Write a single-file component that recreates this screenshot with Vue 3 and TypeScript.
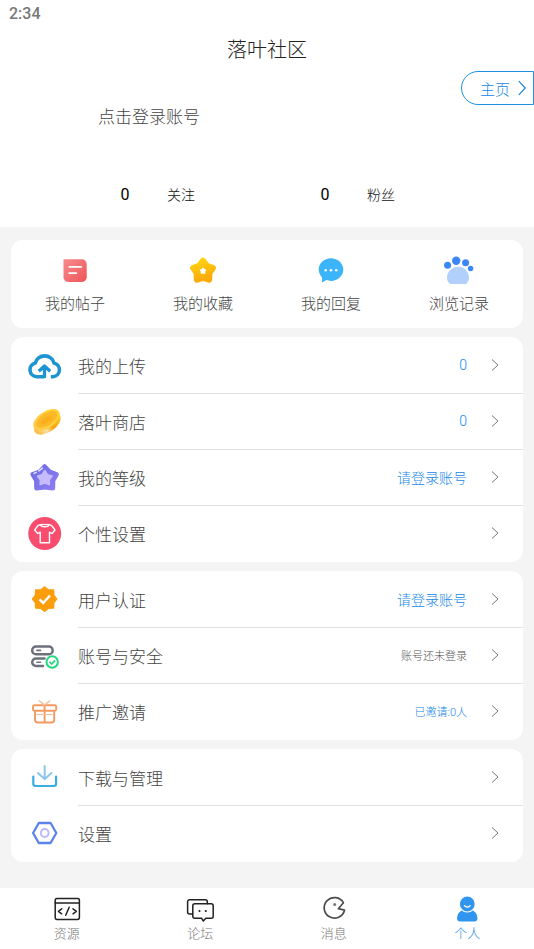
<script setup lang="ts">
interface Row {
  icon: string
  label: string
  value?: string
  tone?: 'small' | 'muted'
}

const stats = [
  { count: 0, label: '关注' },
  { count: 0, label: '粉丝' },
]

const shortcuts = [
  { icon: 'post', label: '我的帖子' },
  { icon: 'star', label: '我的收藏' },
  { icon: 'reply', label: '我的回复' },
  { icon: 'paw', label: '浏览记录' },
]

const groups: Row[][] = [
  [
    { icon: 'upload', label: '我的上传', value: '0' },
    { icon: 'coin', label: '落叶商店', value: '0' },
    { icon: 'level', label: '我的等级', value: '请登录账号' },
    { icon: 'shirt', label: '个性设置' },
  ],
  [
    { icon: 'verify', label: '用户认证', value: '请登录账号' },
    { icon: 'security', label: '账号与安全', value: '账号还未登录', tone: 'muted' },
    { icon: 'gift', label: '推广邀请', value: '已邀请:0人', tone: 'small' },
  ],
  [
    { icon: 'download', label: '下载与管理' },
    { icon: 'settings', label: '设置' },
  ],
]

const tabs = [
  { icon: 'code', label: '资源' },
  { icon: 'forum', label: '论坛' },
  { icon: 'message', label: '消息' },
  { icon: 'person', label: '个人', active: true },
]
</script>

<template>
  <div class="page">
    <header class="header">
      <div class="status">2:34</div>
      <h1 class="title">落叶社区</h1>
      <div class="profile">
        <a class="login" href="#login">点击登录账号</a>
        <button class="home" type="button">
          主页
          <svg class="home-arrow" viewBox="0 0 8 16" fill="none" stroke="currentColor" stroke-width="1.2" aria-hidden="true">
            <path d="M.8 1.2 7.2 8 .8 14.8" />
          </svg>
        </button>
      </div>
      <div class="stats">
        <a v-for="s in stats" :key="s.label" class="stat" href="#stats">
          <span class="stat-count">{{ s.count }}</span>
          <span class="stat-label">{{ s.label }}</span>
        </a>
      </div>
    </header>

    <main class="content">
      <nav class="card shortcuts">
        <a v-for="s in shortcuts" :key="s.label" class="shortcut" href="#shortcut">
          <svg class="icon-md" viewBox="0 0 30 30" fill="none" aria-hidden="true">
            <template v-if="s.icon === 'post'">
              <defs>
                <linearGradient id="postFill" x1="0" y1="0" x2="1" y2="1">
                  <stop offset="0" stop-color="#f78c8e" />
                  <stop offset="1" stop-color="#ee5458" />
                </linearGradient>
              </defs>
              <path d="M3.5 3.3H22a4.7 4.7 0 0 1 4.7 4.7v13.3A4.7 4.7 0 0 1 22 26H8.2a4.700 4.700 0 0 1-4.700-4.700z" fill="url(#postFill)" />
              <path d="M9.300 10.900h12M9.300 17.200h7" stroke="#fff" stroke-width="1.800" stroke-linecap="round" />
            </template>
            <template v-else-if="s.icon === 'star'">
              <defs>
                <linearGradient id="starFill" x1="0" y1="0" x2="0.300" y2="1">
                  <stop offset="0" stop-color="#ffd313" />
                  <stop offset="1" stop-color="#fbac0b" />
                </linearGradient>
              </defs>
              <path
                d="M15 5 18.800 9.900 24.700 12 21.200 17 21 23.500 15 21.700 9 23.500 8.800 17 5.300 12 11.200 9.900Z"
                fill="url(#starFill)" stroke="url(#starFill)" stroke-width="6.400" stroke-linejoin="round"
              />
              <path
                d="M15 11.800 16.100 13.500 18 14 16.800 15.600 16.900 17.500 15 16.900 13.100 17.500 13.200 15.600 12 14 13.900 13.500Z"
                fill="#fff" stroke="#fff" stroke-width="1" stroke-linejoin="round"
              />
            </template>
            <template v-else-if="s.icon === 'reply'">
              <path d="M15 2.200c6.900 0 12.300 5 12.300 11.300S21.900 24.900 15 24.900c-1.800 0-3.200-.3-4.600-.8L6 26.500l.1-5.100C4 19.300 2.700 16.600 2.700 13.500 2.700 7.200 8.100 2.200 15 2.200z" fill="#3cb4fa" />
              <g fill="#fff">
                <circle cx="9.700" cy="14.300" r="1.300" />
                <circle cx="15" cy="14.300" r="1.300" />
                <circle cx="20.300" cy="14.300" r="1.300" />
              </g>
            </template>
            <template v-else>
              <g fill="#3d87f5">
                <circle cx="3.600" cy="9.200" r="3.500" />
                <circle cx="12.200" cy="4.800" r="4.200" />
                <circle cx="21.600" cy="6.700" r="3.500" />
                <circle cx="26.600" cy="12.500" r="2.700" />
              </g>
              <path d="M14.200 10.800c6.200 0 10.800 4.800 10.800 11 0 2.800-1.200 5-3 6.200H6.200C4.300 26.800 3 24.600 3 21.800c0-6.200 5-11 11.200-11z" fill="#b1d0fb" />
            </template>
          </svg>
          <span class="shortcut-label">{{ s.label }}</span>
        </a>
      </nav>

      <section v-for="(group, gi) in groups" :key="gi" class="card list">
        <a v-for="row in group" :key="row.label" class="row" href="#row">
          <svg class="icon-lg" viewBox="0 0 34 34" fill="none" aria-hidden="true">
            <template v-if="row.icon === 'upload'">
              <g stroke="#1d95d3" stroke-width="3.600" stroke-linejoin="round">
                <path d="M16.500 28.700H8.600A7 7 0 0 1 7.400 14.900 9.400 8.600 0 0 1 25.900 14.900 7 7 0 0 1 25.200 28.700h-2.400" />
                <path d="M16.500 30V18.500M10.800 23.200l5.700-5.200 5.700 5.200" stroke-width="3.300" />
              </g>
            </template>
            <template v-else-if="row.icon === 'coin'">
              <defs>
                <linearGradient id="coinEdge" x1="0" y1="0" x2="1" y2="0">
                  <stop offset="0" stop-color="#ffb52e" />
                  <stop offset="0.350" stop-color="#fbe0a0" />
                  <stop offset="0.600" stop-color="#f6a50e" />
                  <stop offset="1" stop-color="#ffc62d" />
                </linearGradient>
                <linearGradient id="coinFace" x1="0" y1="0" x2="1" y2="0">
                  <stop offset="0" stop-color="#ffcb4d" />
                  <stop offset="1" stop-color="#ffd22c" />
                </linearGradient>
              </defs>
              <ellipse cx="19.400" cy="19.900" rx="15" ry="8.200" transform="rotate(-34 19.400 19.900)" fill="url(#coinEdge)" />
              <ellipse cx="18.500" cy="15.800" rx="15" ry="8.300" transform="rotate(-34 18.500 15.800)" fill="url(#coinFace)" />
              <ellipse cx="18.800" cy="15.400" rx="12" ry="5.900" transform="rotate(-34 18.800 15.400)" fill="#fbb929" />
              <ellipse cx="18.200" cy="16.200" rx="7" ry="2.600" transform="rotate(-34 18.200 16.200)" fill="#fdae1d" />
            </template>
            <template v-else-if="row.icon === 'level'">
              <defs>
                <linearGradient id="levelFill" x1="0" y1="0" x2="1" y2="1">
                  <stop offset="0" stop-color="#6c6de3" />
                  <stop offset="1" stop-color="#8f7cf1" />
                </linearGradient>
              </defs>
              <path
                d="M16.600 6.500 21.400 11.600 28.600 14.300 25 20.600 24.900 28.300 16.600 27.300 8.500 28.300 8.400 20.600 4.700 14.300 11.900 11.600Z"
                fill="url(#levelFill)" stroke="url(#levelFill)" stroke-width="4.600" stroke-linejoin="round"
              />
              <path
                d="M16.800 10.900 19.500 15 23.900 16.200 21 19.900 21.200 24.400 16.800 22.900 12.400 24.400 12.600 19.900 9.700 16.200 14.100 15Z"
                fill="#c5bbfd" stroke="#c5bbfd" stroke-width="2" stroke-linejoin="round"
              />
              <path d="M6 13.400 8.300 12.300M10.800 11l3.600-2.900" stroke="#e9e7ff" stroke-width="1.400" stroke-linecap="round" />
            </template>
            <template v-else-if="row.icon === 'shirt'">
              <circle cx="16.700" cy="17.500" r="16.500" fill="#f94d70" />
              <path
                d="M12.300 8.700c1.300 2.800 7.700 2.800 9 0l2.400.9L27 14l-3 3.500-2.500-1.300v10.600H12.200V16.200l-2.500 1.300-3-3.500 3.200-4.400z"
                stroke="#fff" stroke-width="1.400" stroke-linejoin="round"
              />
              <path d="M12.500 8.500h8.600" stroke="#fff" stroke-width="1.200" />
            </template>
            <template v-else-if="row.icon === 'verify'">
              <path
                d="M16.600 5.200 20.300 8.200 25.300 8.300 25.500 13.300 28.400 17 25.500 20.700 25.300 25.700 20.300 25.900 16.600 28.900 12.900 25.900 7.900 25.700 7.700 20.700 4.800 17 7.700 13.300 7.900 8.300 12.900 8.200Z"
                fill="#fc9d0e" stroke="#fc9d0e" stroke-width="2" stroke-linejoin="round"
              />
              <path d="m11.500 17.300 3.700 3.700 6.800-7.500" stroke="#fff" stroke-width="2.500" />
            </template>
            <template v-else-if="row.icon === 'security'">
              <g stroke="#6d717c" stroke-width="2.500" stroke-linecap="round">
                <rect x="4.200" y="8.600" width="20.500" height="7.600" rx="3.800" />
                <path d="M15 28H8a3.800 3.800 0 0 1 0-7.600h8.500" />
                <path d="M9 12.400h3.500M9 24.200h3.500" stroke-width="1.600" />
              </g>
              <circle cx="24.200" cy="24" r="5.700" fill="#fff" stroke="#25d782" stroke-width="2" />
              <path d="m21.500 23.900 2.200 2.100 3.500-3.700" stroke="#25d782" stroke-width="1.800" />
            </template>
            <template v-else-if="row.icon === 'gift'">
              <g stroke="#f29a62" stroke-width="1.900" stroke-linejoin="round">
                <rect x="5" y="11.300" width="23.200" height="5.500" rx="1.500" />
                <path d="M7 17v9a2.500 2.500 0 0 0 2.500 2.500h14.200a2.500 2.500 0 0 0 2.500-2.500v-9M16.600 11.300v17.200" />
                <path d="M8.500 20.500h16" stroke-width="1.200" stroke="#f7c09b" />
              </g>
              <path d="m11 6.500 5.600 4.600 5.600-4.600" stroke="#f5bd9a" stroke-width="1.500" />
            </template>
            <template v-else-if="row.icon === 'download'">
              <path d="M5.300 16.500v7.300a2.200 2.200 0 0 0 2.200 2.200h18.400a2.200 2.200 0 0 0 2.200-2.200v-7.300" stroke="#3aaee3" stroke-width="2.200" stroke-linecap="round" />
              <path d="M16.700 6v13M10 13l6.700 6.200L23.400 13" stroke="#8ac6ee" stroke-width="2" stroke-linecap="round" />
            </template>
            <template v-else>
              <path d="M10.800 7h11.800l5.700 10-5.700 10H10.800L5.100 17z" stroke="#5b83ea" stroke-width="2.300" stroke-linejoin="round" />
              <circle cx="16.700" cy="17" r="3.900" stroke="#bdb9fa" stroke-width="2" />
            </template>
          </svg>
          <span class="row-body">
            <span class="row-label">{{ row.label }}</span>
            <span v-if="row.value" class="row-value" :class="row.tone">{{ row.value }}</span>
            <svg class="chevron" viewBox="0 0 8 14" fill="none" stroke="#777" stroke-width="1" aria-hidden="true">
              <path d="M1 1.500 7 7 1 12.500" />
            </svg>
          </span>
        </a>
      </section>
    </main>

    <nav class="tabbar">
      <a v-for="t in tabs" :key="t.label" class="tab" :class="{ active: t.active }" href="#tab">
        <svg class="icon-md" viewBox="0 0 30 30" fill="none" stroke-linecap="round" stroke-linejoin="round" aria-hidden="true">
          <template v-if="t.icon === 'code'">
            <g stroke="#222" stroke-width="1.500">
              <rect x="3.200" y="4.600" width="24.200" height="20.800" rx="1.800" />
              <path d="M3.200 9h24.200" />
              <path d="m9.700 14.800-3.300 2.500 3.300 2.500M21 14.800l3.300 2.500-3.300 2.500M17.200 13.200l-3.500 8" />
            </g>
          </template>
          <template v-else-if="t.icon === 'forum'">
            <g stroke="#222" stroke-width="1.500">
              <path d="M7.500 20H4.600a2 2 0 0 1-2-2V7.700a2 2 0 0 1 2-2h15.700a2 2 0 0 1 2 2v2" />
              <path d="M9.800 9.800h16.400a2 2 0 0 1 2 2v10.400a2 2 0 0 1-2 2h-5.400L18.300 27l-1.800-2.800H9.800a2 2 0 0 1-2-2V11.800a2 2 0 0 1 2-2z" />
            </g>
            <circle cx="14.500" cy="17" r="1.100" fill="#222" />
            <circle cx="20.800" cy="17" r="1.100" fill="#222" />
          </template>
          <template v-else-if="t.icon === 'message'">
            <path d="M24.400 8.700A10.300 10.300 0 1 0 25.500 16.200L19.300 14.700z" stroke="#4c4c4c" stroke-width="1.700" />
            <circle cx="15.700" cy="10.400" r="1.500" fill="#777" />
          </template>
          <template v-else>
            <path d="M9.500 16.600h11.600c2.700 1.700 4.300 4.300 4.300 7.600 0 2.200-1 3.200-3.200 3.200H8.300c-2.200 0-3.200-1-3.200-3.200 0-3.300 1.600-5.900 4.400-7.600z" fill="#3095ee" />
            <circle cx="15.300" cy="10" r="8" fill="#3095ee" stroke="#fff" stroke-width="1.200" />
            <path d="M12.500 11.700c1.200 1.900 4.400 1.900 5.600 0" stroke="#fff" stroke-width="1.300" />
          </template>
        </svg>
        <span class="tab-label">{{ t.label }}</span>
      </a>
    </nav>
  </div>
</template>

<style>
body {
  margin: 0;
  background: #f4f4f4;
}
</style>

<style scoped>
.page {
  display: flex;
  flex-direction: column;
  min-height: 100vh;
  background: #f4f4f4;
  color: #444;
  font-family: Roboto, "Noto Sans CJK SC", sans-serif;
  font-weight: 300;
}

a {
  color: inherit;
  text-decoration: none;
}

svg {
  display: block;
  flex: none;
}

.header {
  background: #fff;
  padding-bottom: 12px;
}

.status {
  padding-left: 9px;
  font-size: 16px;
  font-weight: 500;
  line-height: 28px;
  color: #777;
}

.title {
  margin: 0;
  font-size: 20px;
  font-weight: 300;
  line-height: 43px;
  padding-top: 1px;
  text-align: center;
  color: #222;
}

.profile {
  display: flex;
  justify-content: space-between;
  align-items: flex-start;
  height: 103px;
  margin-top: -1px;
  padding-left: 98px;
}

.login {
  padding-top: 34px;
  font-size: 17px;
  line-height: 24px;
}

.home {
  display: flex;
  align-items: center;
  gap: 8px;
  height: 34px;
  padding: 0 7px 0 18px;
  border: 1px solid #1e90e4;
  border-radius: 17px 0 0 17px;
  background: #fff;
  color: #1788e0;
  font: inherit;
  font-size: 15px;
}

.home-arrow {
  width: 8px;
  height: 16px;
}

.stats {
  display: grid;
  grid-template-columns: 1fr 1fr;
  padding: 1px 81px 0 53px;
}

.stat {
  display: flex;
  justify-content: center;
  align-items: center;
  line-height: 40px;
  color: #111;
}

.stat-count,
.stat-label {
  width: 56px;
  text-align: center;
}

.stat-count {
  font-size: 16px;
  font-weight: 400;
  color: #000;
}

.stat-label {
  font-size: 14px;
}

.content {
  display: flex;
  flex-direction: column;
  gap: 9px;
  padding: 13px 11px 26px;
}

.card {
  border-radius: 12px;
  background: #fff;
}

.shortcuts {
  display: grid;
  grid-template-columns: repeat(4, 1fr);
  padding: 16px 0 14px;
}

.shortcut {
  display: flex;
  flex-direction: column;
  align-items: center;
  gap: 8px;
}

.shortcut-label {
  font-size: 15px;
  line-height: 20px;
}

.icon-md {
  width: 30px;
  height: 30px;
}

.icon-lg {
  width: 34px;
  height: 34px;
}

.list {
  padding-bottom: 1px;
}

.row {
  display: flex;
  align-items: center;
  gap: 16px;
  padding-left: 17px;
}

.row-body {
  display: flex;
  flex: 1;
  align-items: center;
  gap: 24px;
  box-sizing: border-box;
  height: 56px;
  padding-right: 24px;
}

.row + .row .row-body {
  box-shadow: inset 0 1px 0 #e0e0e0;
}

.row-label {
  flex: 1;
  font-size: 17px;
}

.row-value {
  font-size: 14px;
  color: #1788e8;
}

.row-value.small,
.row-value.muted {
  font-size: 11px;
}

.row-value.muted {
  color: #555;
}

.chevron {
  width: 8px;
  height: 14px;
}

.tabbar {
  position: sticky;
  bottom: 0;
  display: grid;
  grid-template-columns: repeat(4, 1fr);
  margin-top: auto;
  padding: 6px 0;
  background: #fff;
}

.tab {
  display: flex;
  flex-direction: column;
  align-items: center;
  color: #777;
}

.tab-label {
  font-size: 13px;
  line-height: 19px;
}

.tab.active {
  color: #1788e8;
}
</style>
